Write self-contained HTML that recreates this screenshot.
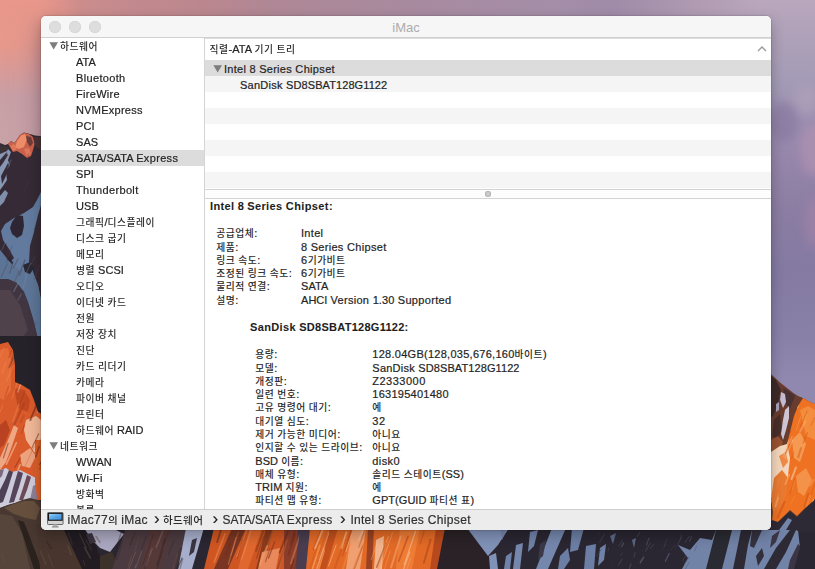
<!DOCTYPE html>
<html lang="ko">
<head>
<meta charset="utf-8">
<title>iMac</title>
<style>
html,body{margin:0;padding:0;}
body{width:815px;height:569px;overflow:hidden;position:relative;background:#4a3f45;
 font-family:"Liberation Sans","Noto Sans CJK KR",sans-serif;font-size:11px;color:#242424;-webkit-text-stroke-width:0.2px;}
#bg{position:absolute;left:0;top:0;width:815px;height:569px;}
#shadow{position:absolute;left:41px;top:16px;width:730px;height:514px;border-radius:5px;box-shadow:0 5px 14px rgba(0,0,0,.26),0 0 2px rgba(0,0,0,.35);}
#win{position:absolute;left:41px;top:16px;width:730px;height:514px;background:#fff;border-radius:5px;overflow:hidden;}
#title{position:absolute;left:0;top:0;width:100%;height:21px;background:#f6f6f6;border-bottom:1px solid #d0d0d0;
 text-align:center;line-height:24px;font-size:13px;color:#acacac;-webkit-text-stroke-width:0;}
.tl{position:absolute;top:5px;width:12px;height:12px;border-radius:50%;background:#dddddd;box-shadow:inset 0 0 0 0.5px #d0d0d0;}
#side{position:absolute;left:0;top:22px;width:163px;height:471px;border-right:1px solid #d4d4d4;overflow:hidden;background:#fff;}
#side div{position:absolute;left:0;width:163px;height:16px;line-height:16px;white-space:nowrap;box-sizing:border-box;}
#side .it{padding-left:35px;}
#side .gr{padding-left:19px;}
#side .sel{background:#dcdcdc;}
.tri{position:absolute;left:8px;top:4px;}
#top{position:absolute;left:164px;top:22px;width:566px;height:151px;overflow:hidden;box-shadow:inset 0 1px 0 #dcdcdc;}
#hdr{position:absolute;left:0;top:0;width:100%;height:22px;line-height:22.5px;padding-left:4.5px;box-sizing:border-box;}
.row{position:absolute;left:0;width:100%;height:16px;line-height:18px;white-space:nowrap;box-sizing:border-box;}
#split{position:absolute;left:164px;top:173px;width:566px;height:10px;background:#fdfdfd;border-top:1px solid #d3d3d3;border-bottom:1px solid #d3d3d3;box-sizing:border-box;}
#split i{position:absolute;left:279.5px;top:1px;width:6px;height:6px;border-radius:50%;background:#c9c9c9;box-shadow:inset 0 0 0 0.8px #b2b2b2;}
#det{position:absolute;left:164px;top:183px;width:566px;height:310px;overflow:hidden;}
#det div{position:absolute;white-space:nowrap;line-height:14px;height:14px;}
#det .b{font-weight:bold;-webkit-text-stroke-width:0.05px;color:#1e1e1e;}
#status{position:absolute;left:0;top:493px;width:100%;height:21px;background:#ececec;border-top:1px solid #cdcdcd;font-size:12px;line-height:21px;color:#303030;box-sizing:border-box;}
#status>span{position:absolute;top:0;white-space:nowrap;}
#imac{position:absolute;left:6px;top:1.6px;}
.cv{font-size:17px;line-height:17px;color:#1c1c1c;}
.k{font-size:9.75px;font-weight:500;color:#2a2a2a;-webkit-text-stroke-width:0;}
#status .k{font-size:10.6px;}

</style>
</head>
<body>
<svg id="bg" width="815" height="569" viewBox="0 0 815 569">
<defs>
<linearGradient id="skyh" x1="0" y1="0" x2="815" y2="0" gradientUnits="userSpaceOnUse">
<stop offset="0" stop-color="#e8968a"/><stop offset="0.03" stop-color="#e3948a"/><stop offset="0.07" stop-color="#d18e8b"/><stop offset="0.15" stop-color="#c48a8d"/><stop offset="0.25" stop-color="#bb878f"/><stop offset="0.33" stop-color="#b08795"/><stop offset="0.4" stop-color="#ac899a"/><stop offset="0.5" stop-color="#a88a9f"/><stop offset="0.68" stop-color="#a48ea8"/><stop offset="0.75" stop-color="#a08ba8"/><stop offset="0.87" stop-color="#b29db4"/><stop offset="0.94" stop-color="#bba8bd"/><stop offset="1" stop-color="#b9a9bf"/>
</linearGradient>
<linearGradient id="skyL" x1="0" y1="0" x2="0" y2="150" gradientUnits="userSpaceOnUse">
<stop offset="0" stop-color="#e8978a"/><stop offset="0.3" stop-color="#e8998b"/><stop offset="0.5" stop-color="#d69c9a"/><stop offset="0.65" stop-color="#c8a0a6"/><stop offset="1" stop-color="#c9a3a8"/>
</linearGradient>
<linearGradient id="skyR" x1="0" y1="0" x2="0" y2="420" gradientUnits="userSpaceOnUse">
<stop offset="0" stop-color="#b9a7bd"/><stop offset="0.1" stop-color="#ada0b8"/><stop offset="0.2" stop-color="#a39bb6"/><stop offset="0.3" stop-color="#9a8cae"/><stop offset="0.4" stop-color="#9484a9"/><stop offset="0.5" stop-color="#8b7da3"/><stop offset="0.65" stop-color="#847aa2"/><stop offset="0.8" stop-color="#8980a8"/><stop offset="0.9" stop-color="#9088ae"/><stop offset="1" stop-color="#9088ae"/>
</linearGradient>
<linearGradient id="fadeL" x1="0" y1="0" x2="1" y2="0"><stop offset="0" stop-color="#e9978a" stop-opacity="1"/><stop offset="1" stop-color="#e9978a" stop-opacity="0"/></linearGradient>
<linearGradient id="gmL" x1="0" y1="0" x2="80" y2="0" gradientUnits="userSpaceOnUse"><stop offset="0" stop-color="#fff"/><stop offset="0.5" stop-color="#fff"/><stop offset="1" stop-color="#000"/></linearGradient>
<linearGradient id="ovL" x1="0" y1="0" x2="60" y2="0" gradientUnits="userSpaceOnUse"><stop offset="0" stop-color="#a07888" stop-opacity="0"/><stop offset="0.3" stop-color="#a07888" stop-opacity="0.05"/><stop offset="0.7" stop-color="#a07888" stop-opacity="0.35"/><stop offset="1" stop-color="#a07888" stop-opacity="0.4"/></linearGradient>
<linearGradient id="gmR" x1="730" y1="0" x2="815" y2="0" gradientUnits="userSpaceOnUse"><stop offset="0" stop-color="#000"/><stop offset="0.5" stop-color="#fff"/><stop offset="1" stop-color="#fff"/></linearGradient>
<linearGradient id="gmV" x1="0" y1="0" x2="0" y2="160" gradientUnits="userSpaceOnUse"><stop offset="0" stop-color="#000"/><stop offset="0.08" stop-color="#222"/><stop offset="0.3" stop-color="#fff"/><stop offset="1" stop-color="#fff"/></linearGradient>
<mask id="mV" maskUnits="userSpaceOnUse" x="0" y="0" width="60" height="160"><rect x="0" y="0" width="60" height="160" fill="url(#gmV)"/></mask>
<mask id="mL" maskUnits="userSpaceOnUse" x="0" y="0" width="80" height="160"><rect x="0" y="0" width="80" height="160" fill="url(#gmL)"/></mask>
<mask id="mR" maskUnits="userSpaceOnUse" x="730" y="0" width="85" height="420"><rect x="730" y="0" width="85" height="420" fill="url(#gmR)"/></mask>
<clipPath id="cpB1"><path d="M214 528 L300 528 L296 569 L204 569 Z"/></clipPath>
<clipPath id="cpB2"><path d="M310 528 L446 528 L438 569 L306 569 Z"/></clipPath>
<clipPath id="cpL"><path d="M0 344 L8 342 L13 350 L15 365 L15 382 L22 385 L30 390 L34 400 L38 412 L45 416 L45 470 L0 470 Z"/></clipPath>
<clipPath id="cpR"><path d="M803 398 L810 402 L815 404 L815 500 L805 508 L797 516 L790 510 L778 522 L772 522 L774 500 L780 470 L784 452 L788 440 L791 428 L794 416 L798 406 Z"/></clipPath>
<clipPath id="cpLs"><rect x="0" y="146" width="41" height="196"/></clipPath>
<filter id="b2" x="-20%" y="-20%" width="140%" height="140%"><feGaussianBlur stdDeviation="2"/></filter>
<filter id="b1" x="-20%" y="-20%" width="140%" height="140%"><feGaussianBlur stdDeviation="0.7"/></filter>
<filter id="b4" x="-30%" y="-30%" width="160%" height="160%"><feGaussianBlur stdDeviation="5"/></filter>
</defs>
<rect width="815" height="569" fill="#3a3038"/>
<!-- sky -->
<rect x="0" y="0" width="815" height="40" fill="url(#skyh)"/>
<rect x="0" y="0" width="80" height="160" fill="url(#skyL)" mask="url(#mL)"/>
<rect x="0" y="0" width="60" height="160" fill="url(#ovL)" mask="url(#mV)"/>
<rect x="730" y="0" width="85" height="420" fill="url(#skyR)" mask="url(#mR)"/>
<!-- right clouds -->
<g filter="url(#b4)">
<ellipse cx="784" cy="122" rx="14" ry="20" fill="#8a7aa2" opacity="0.75"/>
<ellipse cx="814" cy="150" rx="14" ry="26" fill="#b092b0" opacity="0.7"/>
<ellipse cx="816" cy="222" rx="12" ry="26" fill="#a082a6" opacity="0.7"/>
<ellipse cx="806" cy="100" rx="12" ry="14" fill="#b3a4bd" opacity="0.6"/>
</g>
<!-- LEFT mountain -->
<g filter="url(#b1)">
<path d="M0 143 L5 145 L8 144 L11 141 L14.5 143 L20 135 L24 132.5 L30 134 L35 135.5 L45 136.5 L45 540 L0 540 Z" fill="#352c35"/>
<!-- lit peak -->
<path d="M8 144 L11 141 L14.5 143 L20 135 L24 132.7 L29 134 L33 137 L35 143 L33 150 L31 156 L27 158 L22 154 L17 151 L13 152 L10 147 Z" fill="#c9604a"/>
<path d="M17 141 L21 135.5 L25 134 L27 139 L24 147 L19 149 L15 147 Z" fill="#ec8c68"/>
<path d="M10 146 L14 144 L17 149 L13 151 Z" fill="#e07858"/>
<path d="M26 136 L31 137 L33 143 L30 147 L27 142 Z" fill="#6e3c3a"/>
<path d="M24 149 L29 148 L31 154 L27 157 Z" fill="#e0765a"/>
<path d="M33 137 L41 137 L41 150 L35 146 Z" fill="#4a3036"/>
<!-- snow upper left -->
<path d="M0 153 L8 149 L11 152 L8 160 L10 166 L6 172 L7 180 L3 186 L0 190 Z" fill="#8796b2"/>
<path d="M0 196 L5 190 L8 193 L4 202 L0 206 Z" fill="#7f8fac"/>
<path d="M0 160 L6 153 L8 155 L3 163 L0 167 Z" fill="#352c36"/>
<path d="M1 176 L8 163 L10 166 L5 178 L2 184 Z" fill="#352c36"/>
<path d="M0 146 L9 147 L7 151 L0 154 Z" fill="#3b3038"/>
<!-- right couloir -->
<path d="M41 192 L37 200 L33 207 L24 213 L14 218 L5 224 L1 231 L3 240 L9 249 L14 258 L10 262 L4 255 L0 250 L0 279 L8 279 L17 283 L24 292 L28 302 L31 312 L34 322 L37 335 L41 346 L41 300 L38 285 L34 275 L29 262 L30 246 L34 232 L38 215 L41 205 Z" fill="#627a9e"/>
<path d="M12 222 L17 215 L23 216 L24 226 L22 235 L17 238 L12 234 L10 228 Z" fill="#2d2834"/>
<path d="M5 259 L10 257 L13 263 L11 270 L6 268 Z" fill="#2d2834"/>
<path d="M0 250 L6 258 L12 264 L20 270 L26 270 L30 262 L34 275 L38 285 L41 300 L41 346 L37 335 L34 322 L31 312 L28 302 L24 292 L17 283 L8 279 L0 279 Z" fill="#5c7496"/>
<path d="M23 265 L30 262 L34 268 L30 274 L25 272 Z" fill="#2b2632"/>
<!-- brownish ridge lower-left -->
<path d="M0 279 L8 279 L17 283 L24 292 L28 302 L31 312 L34 322 L37 335 L41 346 L41 420 L0 420 Z" fill="#413640"/>
<path d="M0 290 L10 290 L20 305 L28 330 L20 340 L0 340 Z" fill="#54464e" opacity="0.8"/>
<!-- dark above orange -->
<path d="M0 336 L41 336 L41 420 L0 420 Z" fill="#27222b"/>
<!-- orange -->
<path d="M0 344 L8 342 L13 350 L15 365 L15 382 L22 385 L30 390 L34 400 L38 412 L45 416 L45 500 L0 500 Z" fill="#d95a2a"/>
<path d="M0 350 L8 348 L11 360 L11 390 L4 400 L0 398 Z" fill="#e56c38"/>
<path d="M14 388 L24 390 L30 400 L28 412 L18 408 Z" fill="#c04a22"/>
<path d="M0 425 L6 420 L10 430 L4 445 L0 448 Z" fill="#b84320"/>
<path d="M26 420 L36 416 L41 420 L41 455 L34 452 L26 440 L24 430 Z" fill="#f0b797"/>
<path d="M0 458 L8 440 L14 425 L18 428 L12 446 L6 462 L0 470 Z" fill="#efa683"/>
<path d="M20 455 L30 448 L36 456 L30 468 L22 466 Z" fill="#eda27e"/>
<!-- lower snow -->
<path d="M0 470 L6 468 L12 472 L20 470 L28 474 L36 478 L37 499 L22 501 L8 505 L0 508 Z" fill="#cdcada"/>
<path d="M9 470 L13 472 L8 488 L3 502 L0 503 L0 490 L5 480 Z" fill="#4d4254"/>
<path d="M18 471 L23 473 L19 487 L14 502 L9 503 L13 488 Z" fill="#54445a"/>
<path d="M27 475 L31 477 L27 490 L23 500 L19 500 L23 488 Z" fill="#6a4a58"/>
<path d="M0 470 L4 469 L2 476 L0 478 Z" fill="#7a6a80"/>
<path d="M33 486 L37 484 L37 499 L30 500 Z" fill="#8a8098"/>
<path d="M35 440 L45 440 L45 502 L37 498 L35 482 Z" fill="#da5e2c"/>
<!-- boulders -->
<path d="M0 508 L8 505 L15 503 L22 500 L30 498 L38 500 L45 505 L110 530 L110 569 L0 569 Z" fill="#493931"/>
<path d="M4 508 L14 504 L24 501 L34 501 L40 508 L36 520 L26 518 L14 514 Z" fill="#66503e"/>
<path d="M0 514 L12 516 L22 533 L30 569 L0 569 Z" fill="#57453a"/>
<path d="M18 520 L24 522 L42 569 L34 569 Z" fill="#2a201f"/>
</g>
<!-- BOTTOM strip -->
<g filter="url(#b1)">
<rect x="40" y="524" width="775" height="45" fill="#2c2830"/>
<path d="M36 524 L64 524 L84 569 L40 569 Z" fill="#46362f"/>
<path d="M64 530 L90 530 L105 569 L82 569 Z" fill="#231e20"/>
<path d="M84 528 L112 528 L124 534 L110 552 L100 548 L92 540 Z" fill="#a9a6bf"/>
<path d="M86 534 L92 533 L96 542 L90 544 Z" fill="#3a3340"/>
<path d="M100 556 L112 552 L120 569 L100 569 Z" fill="#3c302b"/>
<path d="M112 569 L126 528 L190 528 L176 569 Z" fill="#4b3a3f"/>
<path d="M150 528 L172 528 L160 569 L140 569 Z" fill="#553839"/>
<path d="M186 528 L204 528 L192 569 L178 569 Z" fill="#a6aecb"/>
<path d="M192 540 L197 538 L194 552 L189 556 Z" fill="#3a3442"/>
<path d="M204 528 L216 528 L206 569 L194 569 Z" fill="#2b2630"/>
<path d="M214 528 L300 528 L296 569 L204 569 Z" fill="#cf5722"/>
<path d="M232 528 L246 528 L228 569 L214 569 Z" fill="#7a3520"/>
<path d="M250 528 L262 528 L248 569 L238 569 Z" fill="#e0682e"/>
<path d="M266 528 L274 528 L262 569 L256 569 Z" fill="#8a3a1e"/>
<path d="M284 528 L300 528 L298 569 L284 569 Z" fill="#8c3d2a"/>
<path d="M262 552 L280 548 L276 569 L258 569 Z" fill="#e9885a"/>
<path d="M298 528 L314 528 L306 569 L296 569 Z" fill="#4a3c50"/>
<path d="M310 528 L446 528 L438 569 L306 569 Z" fill="#e36a28"/>
<path d="M352 528 L366 528 L360 569 L346 569 Z" fill="#f0a070"/>
<path d="M368 528 L374 528 L372 569 L366 569 Z" fill="#9a4222"/>
<path d="M376 540 L384 536 L382 569 L374 569 Z" fill="#f2b48c"/>
<path d="M330 528 L338 528 L326 569 L320 569 Z" fill="#c2501e"/>
<path d="M400 528 L420 528 L412 569 L396 569 Z" fill="#ee7c34"/>
<path d="M436 528 L446 528 L438 569 L430 569 Z" fill="#b84a1e"/>
<path d="M445 528 L470 528 L489 556 L494 569 L437 569 Z" fill="#2a2228"/>
<path d="M467 528 L509 528 L498 545 L488 556 Z" fill="#8192b8"/>
<path d="M489 556 L496 553 L498 569 L490 569 Z" fill="#8192b8"/>
<path d="M500 528 L507 528 L502 540 Z" fill="#7487ad"/>
<path d="M516 545 L523 543 L520 569 L513 569 Z" fill="#7487ad"/>
<path d="M552 528 L566 528 L548 569 L536 569 Z" fill="#7487ad"/>
<path d="M572 528 L584 528 L578 550 L570 552 Z" fill="#6c7ea4"/>
<path d="M586 546 L596 544 L594 569 L584 569 Z" fill="#6c7ea4"/>
<path d="M530 532 L538 530 L534 546 L528 552 Z" fill="#6f82a8"/>
<path d="M600 548 L606 544 L604 560 L598 566 Z" fill="#6f82a8"/>
<path d="M560 556 L568 548 L570 560 L564 569 L558 569 Z" fill="#6c7ea4"/>
<path d="M506 556 L512 552 L510 569 L504 569 Z" fill="#6f82a8"/>
<path d="M540 544 L546 540 L543 556 L538 560 Z" fill="#3a3848"/>
<path d="M610 536 L616 533 L613 544 Z" fill="#5a6788"/>
<path d="M632 540 L636 538 L634 548 Z" fill="#5a6788"/>
<path d="M678 545 L690 550 L700 538 L712 540 L716 530 L800 530 L800 569 L682 569 L688 558 Z" fill="#7283a8"/>
<path d="M716 530 L732 530 L722 569 L706 569 Z" fill="#2c2933"/>
<path d="M741 530 L752 530 L748 545 L744 569 L733 569 Z" fill="#2e2a35"/>
<path d="M752 530 L762 530 L754 548 L750 546 Z" fill="#353041"/>
<path d="M764 569 L776 548 L790 530 L796 530 L786 552 L776 569 Z" fill="#2e2a35"/>
<path d="M772 536 L780 530 L776 542 L770 548 Z" fill="#3a3444"/>
<path d="M790 560 L798 544 L802 548 L796 569 L788 569 Z" fill="#3a3444"/>
<path d="M756 556 L762 548 L764 556 L758 566 Z" fill="#322d3a"/>
<path d="M798 530 L815 520 L815 569 L794 569 L800 548 Z" fill="#2b2832"/>
</g>
<!-- RIGHT mountain -->
<g filter="url(#b1)">
<path d="M765 371 L771.5 374.5 L780 382.5 L788 388.7 L793 392.7 L798 396 L803 398 L810 402 L815 404 L815 530 L765 530 Z" fill="#683c2e"/>
<path d="M766 372 L776 380 L781 390 L778 404 L773 416 L766 420 Z" fill="#3e2a2c"/>
<path d="M783 388 L790 392 L795 396 L790 408 L786 404 Z" fill="#4a3032"/>
<path d="M774 420 L780 414 L782 430 L777 440 L772 436 Z" fill="#4a2e2a"/>
<path d="M781 392 L785 394 L786 402 L783 408 L780 400 Z" fill="#c4bcd2"/>
<path d="M785 410 L789 406 L789 418 L786 430 L783 440 L781 434 L783 420 Z" fill="#cfc4d4"/>
<path d="M776 404 L779 402 L779 410 L776 412 Z" fill="#a8a0ba"/>
<path d="M771 440 L778 436 L783 442 L780 452 L771 456 Z" fill="#9a5230"/>
<path d="M803 398 L810 402 L815 404 L815 500 L805 508 L797 516 L790 510 L778 522 L772 522 L774 500 L780 470 L784 452 L788 440 L791 428 L794 416 L798 406 Z" fill="#ee7222"/>
<path d="M771 452 L780 446 L787 444 L790 458 L788 476 L784 492 L778 500 L771 502 Z" fill="#f3d6bc"/>
<path d="M774 478 L782 470 L788 478 L786 496 L780 508 L773 512 L771 500 Z" fill="#ea7a30"/>
<path d="M779 456 L786 452 L788 462 L783 468 Z" fill="#ef8a44"/>
<path d="M800 410 L808 406 L815 410 L815 440 L806 436 Z" fill="#f48c3c"/>
<path d="M792 440 L800 432 L806 444 L800 462 L794 458 Z" fill="#f6a460" opacity="0.8"/>
<path d="M796 476 L806 468 L812 480 L804 496 L798 492 Z" fill="#f59a52" opacity="0.8"/>
<path d="M765 530 L772 520 L778 522 L790 511 L797 517 L805 509 L815 499 L815 532 L800 532 L796 530 Z" fill="#2e2a36"/>
<path d="M779 530 L788 518 L792 520 L786 530 Z" fill="#7485aa"/>
</g>
<g filter="url(#b1)">
<g clip-path="url(#cpB1)" fill="none" stroke-linecap="round"><path d="M247.1 529.4 L236.7 556.6" stroke="#f0a070" stroke-width="0.9" opacity="0.55"/>
<path d="M303.3 531.7 L298.8 544.7" stroke="#8a3a1e" stroke-width="0.9" opacity="0.50"/>
<path d="M295.4 528.5 L290.3 544.9" stroke="#6e2c18" stroke-width="1.6" opacity="0.49"/>
<path d="M309.7 525.7 L298.3 558.1" stroke="#8a3a1e" stroke-width="1.6" opacity="0.55"/>
<path d="M269.8 548.6 L265.5 561.9" stroke="#8a3a1e" stroke-width="1.3" opacity="0.54"/>
<path d="M222.0 526.1 L217.2 542.1" stroke="#5a241a" stroke-width="1.9" opacity="0.51"/>
<path d="M304.7 537.0 L298.0 554.1" stroke="#8a3a1e" stroke-width="0.9" opacity="0.46"/>
<path d="M263.5 536.4 L256.5 558.5" stroke="#6e2c18" stroke-width="1.0" opacity="0.50"/>
<path d="M288.7 529.5 L279.6 552.6" stroke="#6e2c18" stroke-width="1.9" opacity="0.55"/>
<path d="M300.0 535.3 L290.9 563.6" stroke="#f0a070" stroke-width="1.9" opacity="0.37"/>
<path d="M225.0 533.7 L214.2 562.1" stroke="#e8804a" stroke-width="1.7" opacity="0.70"/>
<path d="M294.9 534.2 L288.6 554.8" stroke="#6e2c18" stroke-width="2.1" opacity="0.47"/>
<path d="M274.6 541.8 L268.6 558.1" stroke="#8a3a1e" stroke-width="1.4" opacity="0.67"/>
<path d="M263.7 530.0 L256.0 550.9" stroke="#8a3a1e" stroke-width="1.9" opacity="0.65"/>
<path d="M242.7 539.0 L237.3 558.8" stroke="#8a3a1e" stroke-width="1.0" opacity="0.41"/>
<path d="M238.3 532.4 L230.9 555.4" stroke="#e8804a" stroke-width="1.2" opacity="0.40"/>
<path d="M267.3 546.0 L259.9 564.8" stroke="#f0a070" stroke-width="2.1" opacity="0.58"/>
<path d="M287.0 540.4 L277.5 573.2" stroke="#f0a070" stroke-width="1.3" opacity="0.49"/>
<path d="M225.9 546.8 L220.5 559.2" stroke="#8a3a1e" stroke-width="1.4" opacity="0.39"/>
<path d="M273.7 527.7 L265.4 552.8" stroke="#e8804a" stroke-width="1.7" opacity="0.37"/>
<path d="M236.0 537.5 L228.4 564.3" stroke="#f0a070" stroke-width="1.3" opacity="0.39"/>
<path d="M297.5 559.8 L289.9 582.3" stroke="#6e2c18" stroke-width="1.0" opacity="0.61"/>
<path d="M287.1 541.2 L277.7 569.5" stroke="#8a3a1e" stroke-width="2.1" opacity="0.53"/>
<path d="M230.1 543.6 L226.3 555.0" stroke="#6e2c18" stroke-width="1.8" opacity="0.44"/>
<path d="M251.2 530.0 L241.2 560.3" stroke="#f0a070" stroke-width="1.3" opacity="0.43"/>
<path d="M293.9 559.5 L284.1 591.7" stroke="#5a241a" stroke-width="1.8" opacity="0.43"/></g>
<g clip-path="url(#cpB2)" fill="none" stroke-linecap="round"><path d="M388.5 536.8 L383.2 548.3" stroke="#f6b488" stroke-width="1.3" opacity="0.42"/>
<path d="M400.7 536.4 L391.0 567.6" stroke="#f6b488" stroke-width="1.9" opacity="0.48"/>
<path d="M346.9 532.2 L340.7 547.9" stroke="#f39450" stroke-width="2.0" opacity="0.56"/>
<path d="M316.3 556.7 L310.2 576.2" stroke="#f8c8a0" stroke-width="0.9" opacity="0.49"/>
<path d="M415.6 531.2 L404.3 564.4" stroke="#f8c8a0" stroke-width="1.1" opacity="0.63"/>
<path d="M452.0 538.3 L446.4 559.2" stroke="#f8c8a0" stroke-width="0.9" opacity="0.70"/>
<path d="M319.9 545.3 L312.8 567.8" stroke="#f39450" stroke-width="1.8" opacity="0.69"/>
<path d="M408.0 536.6 L398.7 561.2" stroke="#b8481a" stroke-width="1.7" opacity="0.60"/>
<path d="M330.4 551.0 L327.1 565.3" stroke="#c9541c" stroke-width="1.8" opacity="0.42"/>
<path d="M351.3 534.5 L345.9 551.4" stroke="#f6b488" stroke-width="1.4" opacity="0.64"/>
<path d="M324.5 550.6 L313.9 584.1" stroke="#f39450" stroke-width="1.2" opacity="0.67"/>
<path d="M386.2 543.1 L376.8 567.1" stroke="#9a3c18" stroke-width="1.7" opacity="0.56"/>
<path d="M424.6 529.4 L420.2 543.8" stroke="#b8481a" stroke-width="1.4" opacity="0.46"/>
<path d="M388.6 544.0 L377.2 574.6" stroke="#f39450" stroke-width="0.8" opacity="0.42"/>
<path d="M321.9 527.5 L313.1 549.7" stroke="#b8481a" stroke-width="1.3" opacity="0.56"/>
<path d="M386.8 542.4 L377.2 570.7" stroke="#f39450" stroke-width="1.7" opacity="0.53"/>
<path d="M350.7 542.8 L341.0 575.7" stroke="#f39450" stroke-width="1.9" opacity="0.42"/>
<path d="M378.7 539.0 L371.2 559.7" stroke="#f8c8a0" stroke-width="1.0" opacity="0.38"/>
<path d="M409.7 552.2 L397.6 585.6" stroke="#f8c8a0" stroke-width="1.5" opacity="0.48"/>
<path d="M351.4 528.9 L344.6 551.5" stroke="#b8481a" stroke-width="1.2" opacity="0.52"/>
<path d="M454.6 554.0 L449.4 568.8" stroke="#f39450" stroke-width="1.2" opacity="0.50"/>
<path d="M365.9 527.3 L358.8 547.3" stroke="#9a3c18" stroke-width="1.3" opacity="0.36"/>
<path d="M362.4 546.5 L353.2 570.2" stroke="#c9541c" stroke-width="2.0" opacity="0.39"/>
<path d="M353.2 525.4 L342.3 555.9" stroke="#c9541c" stroke-width="1.8" opacity="0.65"/>
<path d="M410.6 558.1 L403.7 579.1" stroke="#f39450" stroke-width="1.4" opacity="0.60"/>
<path d="M328.5 526.1 L318.9 554.2" stroke="#b8481a" stroke-width="1.0" opacity="0.36"/>
<path d="M328.4 533.4 L318.9 559.5" stroke="#f6b488" stroke-width="1.8" opacity="0.51"/>
<path d="M363.5 543.9 L351.4 578.1" stroke="#c9541c" stroke-width="0.8" opacity="0.60"/>
<path d="M447.3 558.9 L440.6 576.3" stroke="#f6b488" stroke-width="1.5" opacity="0.54"/>
<path d="M344.8 540.0 L334.9 567.8" stroke="#b8481a" stroke-width="2.0" opacity="0.36"/>
<path d="M318.6 542.2 L306.8 577.7" stroke="#c9541c" stroke-width="1.9" opacity="0.39"/>
<path d="M430.6 539.6 L423.9 562.8" stroke="#9a3c18" stroke-width="2.0" opacity="0.46"/>
<path d="M346.1 532.3 L342.0 548.1" stroke="#f8c8a0" stroke-width="1.5" opacity="0.49"/>
<path d="M364.7 526.0 L358.7 540.0" stroke="#f8c8a0" stroke-width="1.8" opacity="0.50"/>
<path d="M323.8 547.9 L317.0 568.3" stroke="#f6b488" stroke-width="1.5" opacity="0.59"/>
<path d="M322.3 530.7 L315.0 548.3" stroke="#f6b488" stroke-width="2.0" opacity="0.69"/>
<path d="M392.6 532.8 L380.3 567.9" stroke="#f6b488" stroke-width="0.9" opacity="0.47"/>
<path d="M327.7 534.0 L317.9 561.4" stroke="#b8481a" stroke-width="0.8" opacity="0.64"/>
<path d="M336.1 545.1 L328.6 565.9" stroke="#f8c8a0" stroke-width="1.0" opacity="0.55"/>
<path d="M390.1 551.0 L381.6 578.4" stroke="#f39450" stroke-width="1.2" opacity="0.46"/></g>
<g clip-path="url(#cpL)" fill="none" stroke-linecap="round"><path d="M47.3 362.9 L40.5 380.7" stroke="#b03e1c" stroke-width="1.8" opacity="0.60"/>
<path d="M25.6 396.5 L18.5 413.9" stroke="#c44a20" stroke-width="1.7" opacity="0.55"/>
<path d="M39.4 346.9 L33.3 364.1" stroke="#6a2a1c" stroke-width="1.6" opacity="0.59"/>
<path d="M12.6 348.7 L8.6 357.4" stroke="#b03e1c" stroke-width="1.2" opacity="0.51"/>
<path d="M4.3 347.3 L-2.5 362.0" stroke="#f08a58" stroke-width="0.7" opacity="0.63"/>
<path d="M36.4 405.4 L30.8 420.2" stroke="#b03e1c" stroke-width="1.7" opacity="0.52"/>
<path d="M39.2 446.5 L35.8 456.8" stroke="#8a3018" stroke-width="1.7" opacity="0.69"/>
<path d="M24.7 390.9 L19.6 404.9" stroke="#b03e1c" stroke-width="1.5" opacity="0.57"/>
<path d="M5.6 362.7 L2.0 373.2" stroke="#f08a58" stroke-width="1.5" opacity="0.40"/>
<path d="M24.2 403.3 L14.2 424.9" stroke="#8a3018" stroke-width="1.6" opacity="0.45"/>
<path d="M25.8 400.8 L19.0 414.5" stroke="#c44a20" stroke-width="1.0" opacity="0.69"/>
<path d="M45.1 347.1 L40.4 360.8" stroke="#f6b898" stroke-width="2.0" opacity="0.49"/>
<path d="M44.2 456.7 L39.8 464.4" stroke="#6a2a1c" stroke-width="1.4" opacity="0.68"/>
<path d="M8.1 443.4 L3.4 457.9" stroke="#6a2a1c" stroke-width="1.2" opacity="0.52"/>
<path d="M42.3 392.3 L40.0 401.3" stroke="#6a2a1c" stroke-width="1.3" opacity="0.46"/>
<path d="M8.5 386.3 L4.8 397.7" stroke="#b03e1c" stroke-width="1.1" opacity="0.47"/>
<path d="M20.3 457.8 L14.9 467.4" stroke="#6a2a1c" stroke-width="1.1" opacity="0.48"/>
<path d="M20.1 464.9 L13.2 480.5" stroke="#f6b898" stroke-width="1.7" opacity="0.65"/>
<path d="M14.9 351.2 L8.4 368.0" stroke="#8a3018" stroke-width="1.0" opacity="0.44"/>
<path d="M25.5 367.8 L21.8 380.1" stroke="#b03e1c" stroke-width="1.8" opacity="0.57"/>
<path d="M44.0 457.9 L38.5 472.9" stroke="#b03e1c" stroke-width="1.9" opacity="0.49"/>
<path d="M30.3 361.6 L22.1 381.6" stroke="#c44a20" stroke-width="0.9" opacity="0.52"/>
<path d="M17.8 380.7 L11.9 398.7" stroke="#f08a58" stroke-width="1.2" opacity="0.43"/>
<path d="M24.2 425.3 L21.2 433.7" stroke="#b03e1c" stroke-width="1.0" opacity="0.67"/>
<path d="M24.9 371.4 L17.9 392.0" stroke="#f6b898" stroke-width="1.3" opacity="0.54"/>
<path d="M13.2 366.0 L6.5 381.1" stroke="#f08a58" stroke-width="1.0" opacity="0.55"/>
<path d="M42.8 435.0 L37.3 447.9" stroke="#c44a20" stroke-width="1.0" opacity="0.44"/>
<path d="M36.6 404.8 L29.9 420.2" stroke="#6a2a1c" stroke-width="1.4" opacity="0.57"/>
<path d="M41.7 370.9 L36.5 381.7" stroke="#f6b898" stroke-width="1.5" opacity="0.50"/>
<path d="M16.4 442.7 L6.4 464.2" stroke="#f6b898" stroke-width="1.6" opacity="0.66"/>
<path d="M23.8 415.5 L20.7 422.1" stroke="#c44a20" stroke-width="1.8" opacity="0.69"/>
<path d="M13.4 358.1 L9.8 367.1" stroke="#6a2a1c" stroke-width="0.8" opacity="0.64"/>
<path d="M34.2 446.6 L24.7 467.0" stroke="#b03e1c" stroke-width="0.7" opacity="0.39"/>
<path d="M28.2 349.5 L22.4 367.1" stroke="#6a2a1c" stroke-width="1.0" opacity="0.57"/>
<path d="M34.1 358.5 L31.1 366.1" stroke="#c44a20" stroke-width="0.9" opacity="0.44"/>
<path d="M38.4 345.1 L33.8 360.0" stroke="#f08a58" stroke-width="1.9" opacity="0.58"/>
<path d="M42.7 402.0 L37.7 412.3" stroke="#f6b898" stroke-width="1.6" opacity="0.46"/>
<path d="M3.0 404.8 L-4.2 421.8" stroke="#f08a58" stroke-width="1.0" opacity="0.50"/>
<path d="M19.0 404.2 L12.6 421.5" stroke="#f08a58" stroke-width="1.6" opacity="0.42"/>
<path d="M38.7 433.7 L31.9 448.1" stroke="#8a3018" stroke-width="1.1" opacity="0.64"/></g>
<g clip-path="url(#cpR)" fill="none" stroke-linecap="round"><path d="M788.2 421.7 L781.7 436.7" stroke="#c8521a" stroke-width="1.3" opacity="0.42"/>
<path d="M787.8 442.6 L783.8 456.4" stroke="#f6c8a0" stroke-width="1.9" opacity="0.37"/>
<path d="M779.0 461.8 L775.5 472.4" stroke="#f6c8a0" stroke-width="1.2" opacity="0.66"/>
<path d="M816.9 476.4 L811.2 494.4" stroke="#d05a18" stroke-width="0.9" opacity="0.58"/>
<path d="M801.1 448.0 L798.1 457.4" stroke="#d05a18" stroke-width="2.0" opacity="0.50"/>
<path d="M782.8 406.4 L780.1 412.8" stroke="#f8b070" stroke-width="1.4" opacity="0.62"/>
<path d="M794.7 480.3 L792.0 489.5" stroke="#f8b070" stroke-width="0.8" opacity="0.52"/>
<path d="M794.4 496.4 L790.9 504.2" stroke="#f89a48" stroke-width="0.7" opacity="0.49"/>
<path d="M813.7 480.0 L810.0 485.9" stroke="#f8b070" stroke-width="1.7" opacity="0.37"/>
<path d="M786.6 404.7 L781.1 417.8" stroke="#d05a18" stroke-width="1.9" opacity="0.57"/>
<path d="M789.5 474.7 L785.2 484.1" stroke="#f8b070" stroke-width="1.6" opacity="0.56"/>
<path d="M813.4 499.3 L812.0 505.5" stroke="#f8b070" stroke-width="1.3" opacity="0.68"/>
<path d="M820.0 439.4 L816.4 447.9" stroke="#f89a48" stroke-width="0.9" opacity="0.52"/>
<path d="M778.4 497.6 L775.4 506.8" stroke="#f6c8a0" stroke-width="1.5" opacity="0.46"/>
<path d="M792.1 436.7 L784.9 452.0" stroke="#f6c8a0" stroke-width="1.2" opacity="0.41"/>
<path d="M795.9 467.5 L791.6 479.0" stroke="#f6c8a0" stroke-width="2.0" opacity="0.66"/>
<path d="M821.5 426.3 L817.7 432.8" stroke="#f89a48" stroke-width="2.0" opacity="0.69"/>
<path d="M785.6 412.2 L782.4 423.4" stroke="#f6c8a0" stroke-width="1.7" opacity="0.65"/>
<path d="M807.2 411.0 L800.4 427.0" stroke="#c8521a" stroke-width="1.0" opacity="0.44"/>
<path d="M789.5 445.0 L785.7 452.8" stroke="#d05a18" stroke-width="1.8" opacity="0.55"/>
<path d="M792.4 440.4 L785.4 458.3" stroke="#f6c8a0" stroke-width="1.5" opacity="0.39"/>
<path d="M798.4 402.0 L797.4 407.4" stroke="#f6c8a0" stroke-width="1.8" opacity="0.67"/>
<path d="M779.8 429.4 L776.2 436.3" stroke="#c8521a" stroke-width="1.0" opacity="0.38"/>
<path d="M800.6 417.0 L796.3 430.0" stroke="#f8b070" stroke-width="0.8" opacity="0.56"/>
<path d="M805.3 421.3 L800.3 431.3" stroke="#f6c8a0" stroke-width="2.0" opacity="0.36"/>
<path d="M810.2 495.8 L805.1 511.5" stroke="#f89a48" stroke-width="1.6" opacity="0.41"/>
<path d="M791.7 419.8 L785.9 435.2" stroke="#f8b070" stroke-width="1.2" opacity="0.63"/>
<path d="M807.2 414.5 L803.0 426.7" stroke="#f89a48" stroke-width="1.6" opacity="0.49"/>
<path d="M790.5 430.9 L783.1 448.3" stroke="#c8521a" stroke-width="1.8" opacity="0.49"/>
<path d="M778.8 480.0 L773.2 495.5" stroke="#f89a48" stroke-width="1.6" opacity="0.42"/>
<path d="M778.3 494.5 L775.0 505.2" stroke="#f89a48" stroke-width="1.5" opacity="0.48"/>
<path d="M812.0 411.9 L808.6 418.0" stroke="#f89a48" stroke-width="0.8" opacity="0.57"/>
<path d="M794.3 452.0 L790.9 459.2" stroke="#c8521a" stroke-width="0.9" opacity="0.37"/>
<path d="M794.9 478.6 L789.8 494.0" stroke="#d05a18" stroke-width="0.9" opacity="0.68"/>
<path d="M820.9 449.7 L819.8 455.7" stroke="#f89a48" stroke-width="0.8" opacity="0.60"/>
<path d="M808.3 493.4 L804.1 506.8" stroke="#c8521a" stroke-width="1.2" opacity="0.65"/>
<path d="M814.5 417.6 L811.0 425.7" stroke="#c8521a" stroke-width="0.9" opacity="0.48"/>
<path d="M784.6 501.9 L777.6 517.5" stroke="#c8521a" stroke-width="1.8" opacity="0.59"/>
<path d="M807.4 432.7 L803.2 443.0" stroke="#d05a18" stroke-width="1.5" opacity="0.46"/>
<path d="M789.0 439.6 L785.1 449.7" stroke="#f6c8a0" stroke-width="0.7" opacity="0.57"/></g>
<g fill="none" stroke-linecap="round"><path d="M649.0 538.2 L646.5 544.9" stroke="#59586a" stroke-width="1.3" opacity="0.54"/>
<path d="M640.0 532.3 L637.4 536.8" stroke="#59586a" stroke-width="1.0" opacity="0.50"/>
<path d="M604.1 534.6 L599.7 542.1" stroke="#6a7088" stroke-width="1.0" opacity="0.32"/>
<path d="M650.4 543.2 L645.4 551.0" stroke="#4a4856" stroke-width="1.4" opacity="0.52"/>
<path d="M681.5 536.8 L677.5 544.7" stroke="#4a4856" stroke-width="1.1" opacity="0.52"/>
<path d="M622.1 559.2 L618.5 565.0" stroke="#59586a" stroke-width="1.3" opacity="0.38"/>
<path d="M681.6 535.0 L680.2 540.2" stroke="#4a4856" stroke-width="1.1" opacity="0.48"/>
<path d="M623.7 543.0 L621.7 546.5" stroke="#6a7088" stroke-width="1.3" opacity="0.50"/>
<path d="M689.5 535.9 L685.0 542.7" stroke="#6a7088" stroke-width="0.6" opacity="0.56"/>
<path d="M696.6 545.9 L694.5 551.2" stroke="#4a4856" stroke-width="0.8" opacity="0.46"/>
<path d="M685.7 555.8 L683.0 560.3" stroke="#59586a" stroke-width="1.1" opacity="0.41"/>
<path d="M676.5 545.5 L675.5 548.9" stroke="#4a4856" stroke-width="0.8" opacity="0.45"/>
<path d="M631.0 563.8 L628.7 571.1" stroke="#59586a" stroke-width="1.2" opacity="0.52"/>
<path d="M622.2 540.2 L619.0 546.1" stroke="#59586a" stroke-width="1.3" opacity="0.34"/>
<path d="M622.7 552.9 L620.0 555.4" stroke="#59586a" stroke-width="0.8" opacity="0.46"/>
<path d="M653.4 544.5 L650.3 548.5" stroke="#59586a" stroke-width="1.1" opacity="0.44"/>
<path d="M613.5 562.8 L610.5 566.5" stroke="#4a4856" stroke-width="0.7" opacity="0.34"/>
<path d="M666.5 539.4 L664.5 546.4" stroke="#4a4856" stroke-width="1.1" opacity="0.47"/>
<path d="M635.0 552.6 L633.9 557.5" stroke="#6a7088" stroke-width="1.0" opacity="0.35"/>
<path d="M600.0 532.2 L597.8 534.7" stroke="#4a4856" stroke-width="0.6" opacity="0.53"/>
<path d="M601.2 549.3 L596.3 557.0" stroke="#4a4856" stroke-width="1.0" opacity="0.49"/>
<path d="M664.8 544.5 L661.9 550.4" stroke="#4a4856" stroke-width="0.8" opacity="0.31"/>
<path d="M688.9 557.4 L684.3 563.8" stroke="#59586a" stroke-width="1.2" opacity="0.44"/>
<path d="M674.2 545.8 L671.2 549.5" stroke="#4a4856" stroke-width="1.1" opacity="0.34"/>
<path d="M689.1 562.4 L684.6 570.1" stroke="#4a4856" stroke-width="0.8" opacity="0.47"/>
<path d="M643.6 557.6 L640.2 562.9" stroke="#6a7088" stroke-width="1.3" opacity="0.57"/>
<path d="M608.5 547.8 L608.1 551.1" stroke="#6a7088" stroke-width="0.8" opacity="0.35"/>
<path d="M691.5 536.7 L689.5 541.3" stroke="#59586a" stroke-width="1.3" opacity="0.49"/>
<path d="M669.3 553.3 L665.3 561.2" stroke="#6a7088" stroke-width="1.2" opacity="0.56"/>
<path d="M643.7 555.4 L640.3 561.0" stroke="#4a4856" stroke-width="0.9" opacity="0.48"/></g>
<g fill="none" stroke-linecap="round"><path d="M163.0 533.5 L158.6 543.2" stroke="#6a4a4c" stroke-width="1.1" opacity="0.34"/>
<path d="M122.2 529.3 L114.7 552.9" stroke="#33262a" stroke-width="1.5" opacity="0.32"/>
<path d="M164.9 539.6 L157.1 565.8" stroke="#33262a" stroke-width="1.7" opacity="0.53"/>
<path d="M174.1 540.3 L168.4 554.5" stroke="#33262a" stroke-width="0.7" opacity="0.55"/>
<path d="M181.7 548.3 L173.3 574.6" stroke="#2a2024" stroke-width="1.2" opacity="0.34"/>
<path d="M180.2 548.7 L174.6 563.9" stroke="#2a2024" stroke-width="0.7" opacity="0.38"/>
<path d="M141.5 550.9 L135.4 567.6" stroke="#8a6a6a" stroke-width="1.6" opacity="0.49"/>
<path d="M122.4 541.2 L117.1 559.4" stroke="#2a2024" stroke-width="1.2" opacity="0.31"/>
<path d="M163.0 550.9 L154.5 577.2" stroke="#2a2024" stroke-width="0.9" opacity="0.30"/>
<path d="M135.4 552.4 L124.0 581.9" stroke="#8a6a6a" stroke-width="0.8" opacity="0.51"/>
<path d="M182.7 558.9 L176.9 580.4" stroke="#2a2024" stroke-width="1.3" opacity="0.35"/>
<path d="M182.0 558.0 L176.3 571.9" stroke="#33262a" stroke-width="1.2" opacity="0.60"/>
<path d="M162.7 531.3 L156.2 547.2" stroke="#8a6a6a" stroke-width="1.7" opacity="0.52"/>
<path d="M152.1 548.7 L145.9 565.5" stroke="#8a6a6a" stroke-width="1.7" opacity="0.45"/>
<path d="M148.8 556.3 L144.1 570.2" stroke="#33262a" stroke-width="1.1" opacity="0.40"/>
<path d="M131.8 555.0 L124.9 577.9" stroke="#6a4a4c" stroke-width="1.2" opacity="0.51"/>
<path d="M139.5 535.4 L134.6 551.4" stroke="#6a4a4c" stroke-width="1.3" opacity="0.38"/>
<path d="M177.4 554.4 L170.7 576.4" stroke="#6a4a4c" stroke-width="1.5" opacity="0.48"/>
<path d="M146.5 535.6 L136.1 564.6" stroke="#33262a" stroke-width="0.9" opacity="0.50"/>
<path d="M134.9 532.8 L130.2 544.9" stroke="#2a2024" stroke-width="1.2" opacity="0.36"/>
<path d="M168.5 531.4 L163.7 544.8" stroke="#33262a" stroke-width="0.7" opacity="0.56"/>
<path d="M153.2 535.1 L142.7 564.7" stroke="#33262a" stroke-width="0.9" opacity="0.48"/></g>
<g fill="none" stroke-linecap="round"><path d="M40.5 551.3 L45.9 564.4" stroke="#6a5648" stroke-width="1.5" opacity="0.41"/>
<path d="M84.6 547.4 L90.3 558.0" stroke="#6a5648" stroke-width="1.6" opacity="0.46"/>
<path d="M68.0 546.0 L71.1 554.6" stroke="#6a5648" stroke-width="1.6" opacity="0.47"/>
<path d="M24.2 533.2 L28.0 544.4" stroke="#2e2420" stroke-width="1.4" opacity="0.25"/>
<path d="M85.9 539.5 L91.5 550.1" stroke="#6a5648" stroke-width="1.2" opacity="0.25"/>
<path d="M83.2 560.1 L84.7 565.4" stroke="#5e4a40" stroke-width="1.0" opacity="0.45"/>
<path d="M94.1 539.5 L96.5 544.7" stroke="#6a5648" stroke-width="1.0" opacity="0.37"/>
<path d="M1.6 554.0 L4.5 561.8" stroke="#6a5648" stroke-width="1.9" opacity="0.30"/>
<path d="M68.4 532.8 L72.3 544.5" stroke="#6a5648" stroke-width="1.2" opacity="0.26"/>
<path d="M27.4 533.2 L29.0 537.5" stroke="#2e2420" stroke-width="1.6" opacity="0.42"/>
<path d="M58.0 517.8 L60.8 525.0" stroke="#6a5648" stroke-width="2.0" opacity="0.50"/>
<path d="M96.1 536.5 L99.9 542.3" stroke="#5e4a40" stroke-width="1.8" opacity="0.41"/>
<path d="M46.9 541.8 L51.1 548.2" stroke="#2e2420" stroke-width="1.6" opacity="0.46"/>
<path d="M79.5 533.9 L86.3 547.9" stroke="#6a5648" stroke-width="1.0" opacity="0.46"/>
<path d="M35.5 557.1 L38.0 563.9" stroke="#2e2420" stroke-width="2.0" opacity="0.42"/>
<path d="M48.2 554.7 L52.9 566.7" stroke="#6a5648" stroke-width="1.2" opacity="0.37"/></g>
<g clip-path="url(#cpLs)" fill="none" stroke-linecap="round"><path d="M18.9 271.1 L13.9 283.3" stroke="#54444a" stroke-width="1.5" opacity="0.27"/>
<path d="M36.4 322.1 L30.3 335.7" stroke="#54444a" stroke-width="1.3" opacity="0.25"/>
<path d="M0.5 330.8 L-4.8 343.0" stroke="#4a3c44" stroke-width="1.2" opacity="0.51"/>
<path d="M8.2 235.9 L2.2 249.5" stroke="#7a86a0" stroke-width="1.4" opacity="0.30"/>
<path d="M39.2 265.6 L34.6 279.1" stroke="#54444a" stroke-width="0.9" opacity="0.46"/>
<path d="M23.4 291.0 L20.9 300.7" stroke="#4a3c44" stroke-width="0.9" opacity="0.32"/>
<path d="M6.1 243.7 L4.0 249.1" stroke="#2a2430" stroke-width="1.3" opacity="0.32"/>
<path d="M7.2 263.9 L1.3 277.0" stroke="#54444a" stroke-width="1.1" opacity="0.42"/>
<path d="M29.3 309.7 L25.7 318.7" stroke="#4a3c44" stroke-width="0.9" opacity="0.36"/>
<path d="M28.4 153.9 L27.2 159.2" stroke="#54444a" stroke-width="1.4" opacity="0.28"/>
<path d="M21.3 293.9 L18.0 300.3" stroke="#7a86a0" stroke-width="1.3" opacity="0.35"/>
<path d="M37.9 219.6 L34.2 229.7" stroke="#2a2430" stroke-width="1.0" opacity="0.35"/>
<path d="M11.1 160.0 L7.6 168.1" stroke="#7a86a0" stroke-width="1.1" opacity="0.40"/>
<path d="M12.0 246.2 L6.5 261.9" stroke="#4a3c44" stroke-width="1.0" opacity="0.35"/>
<path d="M13.2 261.4 L9.6 273.3" stroke="#4a3c44" stroke-width="1.1" opacity="0.42"/>
<path d="M17.9 259.1 L13.2 268.3" stroke="#4a3c44" stroke-width="0.9" opacity="0.53"/>
<path d="M26.8 275.0 L22.9 288.7" stroke="#7a86a0" stroke-width="1.3" opacity="0.44"/>
<path d="M30.6 263.3 L25.1 275.7" stroke="#7a86a0" stroke-width="1.3" opacity="0.30"/>
<path d="M29.2 315.1 L24.4 324.7" stroke="#4a3c44" stroke-width="1.0" opacity="0.50"/>
<path d="M34.6 256.8 L31.1 264.5" stroke="#7a86a0" stroke-width="0.7" opacity="0.26"/>
<path d="M24.9 259.9 L19.3 274.9" stroke="#4a3c44" stroke-width="1.4" opacity="0.48"/>
<path d="M18.5 282.2 L13.7 291.5" stroke="#7a86a0" stroke-width="1.2" opacity="0.55"/>
<path d="M29.0 179.5 L24.1 192.9" stroke="#4a3c44" stroke-width="1.3" opacity="0.31"/>
<path d="M6.7 153.0 L5.4 157.8" stroke="#4a3c44" stroke-width="1.6" opacity="0.51"/></g>
</g>
</svg>

<div id="shadow"></div>
<div id="win">
 <div id="title">iMac<span class="tl" style="left:8px"></span><span class="tl" style="left:28px"></span><span class="tl" style="left:48px"></span></div>
 <div id="side">
  <div class="gr" style="top:0px"><svg class="tri" width="10" height="8" viewBox="0 0 10 8"><path d="M0.4 0.3 L9 0.3 L4.7 7.4 Z" fill="#7d7d7d"/></svg><span class="k" style="letter-spacing:0.50px">하드웨어</span></div>
  <div class="it" style="top:16px"><span style="letter-spacing:0.05px">ATA</span></div>
  <div class="it" style="top:32px"><span style="letter-spacing:0.34px">Bluetooth</span></div>
  <div class="it" style="top:48px"><span style="letter-spacing:0.30px">FireWire</span></div>
  <div class="it" style="top:64px"><span style="letter-spacing:0.25px">NVMExpress</span></div>
  <div class="it" style="top:80px"><span style="letter-spacing:0.05px">PCI</span></div>
  <div class="it" style="top:96px"><span style="letter-spacing:0.05px">SAS</span></div>
  <div class="it sel" style="top:112px"><span style="letter-spacing:0.05px">SATA/SATA </span><span style="letter-spacing:0.33px">Express</span></div>
  <div class="it" style="top:128px"><span style="letter-spacing:0.05px">SPI</span></div>
  <div class="it" style="top:144px"><span style="letter-spacing:0.35px">Thunderbolt</span></div>
  <div class="it" style="top:160px"><span style="letter-spacing:0.05px">USB</span></div>
  <div class="it" style="top:176px"><span class="k" style="letter-spacing:0.50px">그래픽</span><span style="letter-spacing:0.10px">/</span><span class="k" style="letter-spacing:0.50px">디스플레이</span></div>
  <div class="it" style="top:192px"><span class="k" style="letter-spacing:0.50px">디스크</span> <span class="k" style="letter-spacing:0.50px">굽기</span></div>
  <div class="it" style="top:208px"><span class="k" style="letter-spacing:0.50px">메모리</span></div>
  <div class="it" style="top:224px"><span class="k" style="letter-spacing:0.50px">병렬</span> <span style="letter-spacing:0.05px">SCSI</span></div>
  <div class="it" style="top:240px"><span class="k" style="letter-spacing:0.50px">오디오</span></div>
  <div class="it" style="top:256px"><span class="k" style="letter-spacing:0.50px">이더넷</span> <span class="k" style="letter-spacing:0.50px">카드</span></div>
  <div class="it" style="top:272px"><span class="k" style="letter-spacing:0.50px">전원</span></div>
  <div class="it" style="top:288px"><span class="k" style="letter-spacing:0.50px">저장</span> <span class="k" style="letter-spacing:0.50px">장치</span></div>
  <div class="it" style="top:304px"><span class="k" style="letter-spacing:0.50px">진단</span></div>
  <div class="it" style="top:320px"><span class="k" style="letter-spacing:0.50px">카드</span> <span class="k" style="letter-spacing:0.50px">리더기</span></div>
  <div class="it" style="top:336px"><span class="k" style="letter-spacing:0.50px">카메라</span></div>
  <div class="it" style="top:352px"><span class="k" style="letter-spacing:0.50px">파이버</span> <span class="k" style="letter-spacing:0.50px">채널</span></div>
  <div class="it" style="top:368px"><span class="k" style="letter-spacing:0.50px">프린터</span></div>
  <div class="it" style="top:384px"><span class="k" style="letter-spacing:0.50px">하드웨어</span> <span style="letter-spacing:0.05px">RAID</span></div>
  <div class="gr" style="top:400px"><svg class="tri" width="10" height="8" viewBox="0 0 10 8"><path d="M0.4 0.3 L9 0.3 L4.7 7.4 Z" fill="#7d7d7d"/></svg><span class="k" style="letter-spacing:0.50px">네트워크</span></div>
  <div class="it" style="top:416px"><span style="letter-spacing:0.05px">WWAN</span></div>
  <div class="it" style="top:432px"><span style="letter-spacing:0.19px">Wi-Fi</span></div>
  <div class="it" style="top:448px"><span class="k" style="letter-spacing:0.50px">방화벽</span></div>
  <div class="it" style="top:464px"><span class="k" style="letter-spacing:0.50px">볼륨</span></div>
 </div>
 <div id="top">
  <div id="hdr"><span class="k" style="letter-spacing:0.50px">직렬</span><span style="letter-spacing:0.05px">-ATA </span><span class="k" style="letter-spacing:0.50px">기기</span> <span class="k" style="letter-spacing:0.50px">트리</span></div>
  <svg style="position:absolute;left:551px;top:7px" width="12" height="8" viewBox="0 0 12 8"><path d="M2 6 L6 2 L10 6" fill="none" stroke="#9a9a9a" stroke-width="1.4"/></svg>
  <div class="row" style="top:22px;background:#dcdcdc;padding-left:19px"><svg class="tri" style="top:5px" width="10" height="8" viewBox="0 0 10 8"><path d="M0.4 0.3 L9 0.3 L4.7 7.4 Z" fill="#7d7d7d"/></svg><span style="letter-spacing:0.26px">Intel </span><span style="letter-spacing:0.28px">8 </span><span style="letter-spacing:0.28px">Series </span><span style="letter-spacing:0.33px">Chipset</span></div>
  <div class="row" style="top:38px;background:#f5f5f5;padding-left:35px"><span style="letter-spacing:0.25px">SanDisk </span><span style="letter-spacing:0.09px">SD8SBAT128G1122</span></div>
  <div class="row" style="top:70px;background:#f5f5f5"></div>
  <div class="row" style="top:102px;background:#f5f5f5"></div>
  <div class="row" style="top:134px;background:#f5f5f5"></div>
 </div>
 <div id="split"><i></i></div>
 <div id="det">
  <div class="b" style="left:5px;top:0px"><span style="letter-spacing:0.35px">Intel </span><span style="letter-spacing:0.14px">8 </span><span style="letter-spacing:0.36px">Series </span><span style="letter-spacing:0.39px">Chipset:</span></div>
  <div style="left:11.3px;top:27px"><span class="k" style="letter-spacing:0.50px">공급업체</span><span style="letter-spacing:0.10px">:</span></div><div style="left:96.0px;top:27px"><span style="letter-spacing:0.31px">Intel</span></div>
  <div style="left:11.3px;top:41px"><span class="k" style="letter-spacing:0.50px">제품</span><span style="letter-spacing:0.10px">:</span></div><div style="left:96.0px;top:41px"><span style="letter-spacing:0.28px">8 </span><span style="letter-spacing:0.28px">Series </span><span style="letter-spacing:0.33px">Chipset</span></div>
  <div style="left:11.3px;top:54px"><span class="k" style="letter-spacing:0.50px">링크</span> <span class="k" style="letter-spacing:0.50px">속도</span><span style="letter-spacing:0.10px">:</span></div><div style="left:96.0px;top:54px"><span style="letter-spacing:0.55px">6</span><span class="k" style="letter-spacing:0.50px">기가비트</span></div>
  <div style="left:11.3px;top:67px"><span class="k" style="letter-spacing:0.50px">조정된</span> <span class="k" style="letter-spacing:0.50px">링크</span> <span class="k" style="letter-spacing:0.50px">속도</span><span style="letter-spacing:0.10px">:</span></div><div style="left:96.0px;top:67px"><span style="letter-spacing:0.55px">6</span><span class="k" style="letter-spacing:0.50px">기가비트</span></div>
  <div style="left:11.3px;top:80px"><span class="k" style="letter-spacing:0.50px">물리적</span> <span class="k" style="letter-spacing:0.50px">연결</span><span style="letter-spacing:0.10px">:</span></div><div style="left:96.0px;top:80px"><span style="letter-spacing:0.05px">SATA</span></div>
  <div style="left:11.3px;top:94px"><span class="k" style="letter-spacing:0.50px">설명</span><span style="letter-spacing:0.10px">:</span></div><div style="left:96.0px;top:94px"><span style="letter-spacing:0.04px">AHCI </span><span style="letter-spacing:0.29px">Version </span><span style="letter-spacing:0.12px">1.30 </span><span style="letter-spacing:0.34px">Supported</span></div>
  <div class="b" style="left:45px;top:121px"><span style="letter-spacing:0.35px">SanDisk </span><span style="letter-spacing:0.27px">SD8SBAT128G1122:</span></div>
  <div style="left:50.3px;top:148px"><span class="k" style="letter-spacing:0.50px">용량</span><span style="letter-spacing:0.10px">:</span></div><div style="left:167.3px;top:148px"><span style="letter-spacing:0.27px">128.04GB(128,035,676,160</span><span class="k" style="letter-spacing:0.50px">바이트</span><span style="letter-spacing:0.10px">)</span></div>
  <div style="left:50.3px;top:162px"><span class="k" style="letter-spacing:0.50px">모델</span><span style="letter-spacing:0.10px">:</span></div><div style="left:167.3px;top:162px"><span style="letter-spacing:0.25px">SanDisk </span><span style="letter-spacing:0.09px">SD8SBAT128G1122</span></div>
  <div style="left:50.3px;top:175px"><span class="k" style="letter-spacing:0.50px">개정판</span><span style="letter-spacing:0.10px">:</span></div><div style="left:167.3px;top:175px"><span style="letter-spacing:0.49px">Z2333000</span></div>
  <div style="left:50.3px;top:188px"><span class="k" style="letter-spacing:0.50px">일련</span> <span class="k" style="letter-spacing:0.50px">번호</span><span style="letter-spacing:0.10px">:</span></div><div style="left:167.3px;top:188px"><span style="letter-spacing:0.26px">163195401480</span></div>
  <div style="left:50.3px;top:201px"><span class="k" style="letter-spacing:0.50px">고유</span> <span class="k" style="letter-spacing:0.50px">명령어</span> <span class="k" style="letter-spacing:0.50px">대기</span><span style="letter-spacing:0.10px">:</span></div><div style="left:167.3px;top:201px"><span class="k" style="letter-spacing:0.50px">예</span></div>
  <div style="left:50.3px;top:215px"><span class="k" style="letter-spacing:0.50px">대기열</span> <span class="k" style="letter-spacing:0.50px">심도</span><span style="letter-spacing:0.10px">:</span></div><div style="left:167.3px;top:215px"><span style="letter-spacing:0.55px">32</span></div>
  <div style="left:50.3px;top:228px"><span class="k" style="letter-spacing:0.50px">제거</span> <span class="k" style="letter-spacing:0.50px">가능한</span> <span class="k" style="letter-spacing:0.50px">미디어</span><span style="letter-spacing:0.10px">:</span></div><div style="left:167.3px;top:228px"><span class="k" style="letter-spacing:0.50px">아니요</span></div>
  <div style="left:50.3px;top:241px"><span class="k" style="letter-spacing:0.50px">인지할</span> <span class="k" style="letter-spacing:0.50px">수</span> <span class="k" style="letter-spacing:0.50px">있는</span> <span class="k" style="letter-spacing:0.50px">드라이브</span><span style="letter-spacing:0.10px">:</span></div><div style="left:167.3px;top:241px"><span class="k" style="letter-spacing:0.50px">아니요</span></div>
  <div style="left:50.3px;top:255px"><span style="letter-spacing:0.04px">BSD </span><span class="k" style="letter-spacing:0.50px">이름</span><span style="letter-spacing:0.10px">:</span></div><div style="left:167.3px;top:255px"><span style="letter-spacing:0.41px">disk0</span></div>
  <div style="left:50.3px;top:268px"><span class="k" style="letter-spacing:0.50px">매체</span> <span class="k" style="letter-spacing:0.50px">유형</span><span style="letter-spacing:0.10px">:</span></div><div style="left:167.3px;top:268px"><span class="k" style="letter-spacing:0.50px">솔리드</span> <span class="k" style="letter-spacing:0.50px">스테이트</span><span style="letter-spacing:0.08px">(SS)</span></div>
  <div style="left:50.3px;top:281px"><span style="letter-spacing:0.04px">TRIM </span><span class="k" style="letter-spacing:0.50px">지원</span><span style="letter-spacing:0.10px">:</span></div><div style="left:167.3px;top:281px"><span class="k" style="letter-spacing:0.50px">예</span></div>
  <div style="left:50.3px;top:294px"><span class="k" style="letter-spacing:0.50px">파티션</span> <span class="k" style="letter-spacing:0.50px">맵</span> <span class="k" style="letter-spacing:0.50px">유형</span><span style="letter-spacing:0.10px">:</span></div><div style="left:167.3px;top:294px"><span style="letter-spacing:0.05px">GPT(GUID </span><span class="k" style="letter-spacing:0.50px">파티션</span> <span class="k" style="letter-spacing:0.50px">표</span><span style="letter-spacing:0.10px">)</span></div>
 </div>
 <div id="status">
  <svg id="imac" width="17" height="16" viewBox="0 0 17 16"><defs><linearGradient id="scr" x1="0" y1="0" x2="1" y2="1"><stop offset="0" stop-color="#9ad2f6"/><stop offset="0.45" stop-color="#5aa9e8"/><stop offset="1" stop-color="#3f8ad6"/></linearGradient></defs><rect x="0.5" y="0.5" width="15.6" height="12" rx="0.8" fill="#d2d2d2" stroke="#5e5e5e" stroke-width="0.9"/><rect x="0.9" y="0.9" width="14.8" height="7.9" fill="#151517"/><rect x="2" y="1.9" width="12.6" height="5.8" fill="url(#scr)"/><path d="M6.4 12.6 h3.8 l0.5 1.9 h-4.8 z" fill="#b4b4b4"/><rect x="4.9" y="14.3" width="6.8" height="1.1" rx="0.5" fill="#8a8a8a"/></svg>
  <span style="left:26.5px"><span style="letter-spacing:0.29px">iMac77</span><span class="k" style="letter-spacing:0.30px">의</span> <span style="letter-spacing:0.29px">iMac</span></span><span class="cv" style="left:113px">›</span><span style="left:122px"><span class="k" style="letter-spacing:0.30px">하드웨어</span></span><span class="cv" style="left:171.5px">›</span><span style="left:181.5px"><span style="letter-spacing:-0.08px">SATA/SATA </span><span style="letter-spacing:0.35px">Express</span></span><span class="cv" style="left:299px">›</span><span style="left:309.5px"><span style="letter-spacing:0.26px">Intel </span><span style="letter-spacing:0.15px">8 </span><span style="letter-spacing:0.29px">Series </span><span style="letter-spacing:0.35px">Chipset</span></span>
 </div>
</div>
</body>
</html>
